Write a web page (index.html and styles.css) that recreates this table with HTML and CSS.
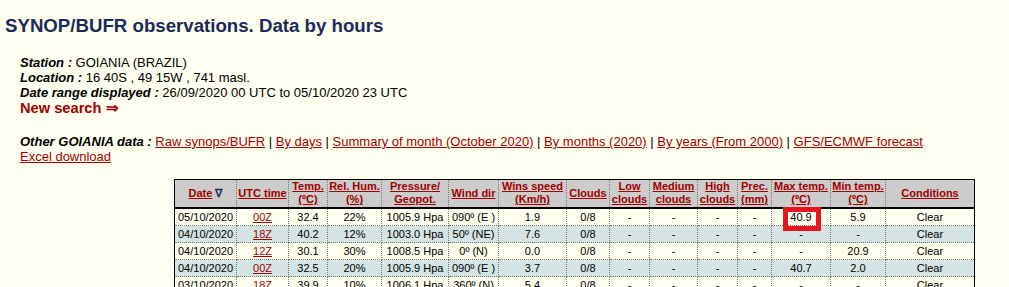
FILE: index.html
```html
<!DOCTYPE html>
<html>
<head>
<meta charset="utf-8">
<title>SYNOP/BUFR observations</title>
<link rel="stylesheet" href="styles.css">
</head>
<body>
<h1 class="title">SYNOP/BUFR observations. Data by hours</h1>
<div class="info">
  <div class="line"><b><i>Station :</i></b> GOIANIA (BRAZIL)</div>
  <div class="line"><b><i>Location :</i></b> 16 40S , 49 15W , 741 masl.</div>
  <div class="line"><b><i>Date range displayed :</i></b> 26/09/2020 00 UTC to 05/10/2020 23 UTC</div>
  <div class="newsearch"><a href="#">New search &rArr;</a></div>
</div>
<div class="other">
  <div class="line"><b><i>Other GOIANIA data :</i></b> <a href="#">Raw synops/BUFR</a> | <a href="#">By days</a> | <a href="#">Summary of month (October 2020)</a> | <a href="#">By months (2020)</a> | <a href="#">By years (From 2000)</a> | <a href="#">GFS/ECMWF forecast</a></div>
  <div class="line"><a href="#">Excel download</a></div>
</div>
<table class="obs">
  <colgroup>
    <col class="c-date"><col class="c-utc"><col class="c-temp"><col class="c-hum"><col class="c-pres"><col class="c-wind"><col class="c-speed"><col class="c-clouds"><col class="c-low"><col class="c-med"><col class="c-high"><col class="c-prec"><col class="c-max"><col class="c-min"><col class="c-cond">
  </colgroup>
  <thead>
    <tr>
      <th><a href="#">Date</a> <span class="sort">&#8711;</span></th>
      <th><a href="#">UTC time</a></th>
      <th><a href="#">Temp.<br>(ºC)</a></th>
      <th><a href="#">Rel. Hum.<br>(%)</a></th>
      <th><a href="#">Pressure/<br>Geopot.</a></th>
      <th><a href="#">Wind dir</a></th>
      <th><a href="#">Wins speed<br>(Km/h)</a></th>
      <th><a href="#">Clouds</a></th>
      <th><a href="#">Low<br>clouds</a></th>
      <th><a href="#">Medium<br>clouds</a></th>
      <th><a href="#">High<br>clouds</a></th>
      <th><a href="#">Prec.<br>(mm)</a></th>
      <th><a href="#">Max temp.<br>(ºC)</a></th>
      <th><a href="#">Min temp.<br>(ºC)</a></th>
      <th><a href="#">Conditions</a></th>
    </tr>
  </thead>
  <tbody>
    <tr>
      <td>05/10/2020</td><td><a href="#">00Z</a></td><td>32.4</td><td>22%</td><td>1005.9 Hpa</td><td>090º (E )</td><td>1.9</td><td>0/8</td><td>-</td><td>-</td><td>-</td><td>-</td><td class="marked">40.9<span class="highlight"></span></td><td>5.9</td><td>Clear</td>
    </tr>
    <tr class="alt">
      <td>04/10/2020</td><td><a href="#">18Z</a></td><td>40.2</td><td>12%</td><td>1003.0 Hpa</td><td>50º (NE)</td><td>7.6</td><td>0/8</td><td>-</td><td>-</td><td>-</td><td>-</td><td>-</td><td>-</td><td>Clear</td>
    </tr>
    <tr>
      <td>04/10/2020</td><td><a href="#">12Z</a></td><td>30.1</td><td>30%</td><td>1008.5 Hpa</td><td>0º (N)</td><td>0.0</td><td>0/8</td><td>-</td><td>-</td><td>-</td><td>-</td><td>-</td><td>20.9</td><td>Clear</td>
    </tr>
    <tr class="alt">
      <td>04/10/2020</td><td><a href="#">00Z</a></td><td>32.5</td><td>20%</td><td>1005.9 Hpa</td><td>090º (E )</td><td>3.7</td><td>0/8</td><td>-</td><td>-</td><td>-</td><td>-</td><td>40.7</td><td>2.0</td><td>Clear</td>
    </tr>
    <tr>
      <td>03/10/2020</td><td><a href="#">18Z</a></td><td>39.9</td><td>10%</td><td>1006.1 Hpa</td><td>360º (N)</td><td>5.4</td><td>0/8</td><td>-</td><td>-</td><td>-</td><td>-</td><td>-</td><td>-</td><td>Clear</td>
    </tr>
    <tr class="alt">
      <td>03/10/2020</td><td><a href="#">12Z</a></td><td>29.8</td><td>28%</td><td>1009.2 Hpa</td><td>090º (E )</td><td>3.7</td><td>0/8</td><td>-</td><td>-</td><td>-</td><td>-</td><td>-</td><td>19.6</td><td>Clear</td>
    </tr>
  </tbody>
</table>
</body>
</html>
```
FILE: styles.css
```css
html, body {
  margin: 0;
  padding: 0;
  background: #ffffef;
  color: #000;
  font-family: "Liberation Sans", Arial, sans-serif;
  font-size: 13px;
}

a {
  color: #a00000;
  text-decoration: underline;
}

.title {
  margin: 15px 0 0 5px;
  font-size: 18.67px;
  line-height: 22px;
  font-weight: bold;
  color: #1b2a5c;
}

.info {
  margin: 18px 0 0 20px;
}

.line {
  line-height: 15px;
}

.newsearch {
  font-size: 14.67px;
  font-weight: bold;
  line-height: 17px;
}

.newsearch a {
  text-decoration: none;
  color: #a00000;
}

.other {
  margin: 17px 0 0 20px;
}

.obs {
  margin: 15px 0 0 174px;
  width: 801px;
  table-layout: fixed;
  border-collapse: collapse;
  border: 1px solid #000;
  font-size: 11px;
}

.c-date { width: 62px; }
.c-utc { width: 52px; }
.c-temp { width: 39px; }
.c-hum { width: 54px; }
.c-pres { width: 67px; }
.c-wind { width: 50px; }
.c-speed { width: 68px; }
.c-clouds { width: 43px; }
.c-low { width: 40px; }
.c-med { width: 48px; }
.c-high { width: 40px; }
.c-prec { width: 34px; }
.c-max { width: 59px; }
.c-min { width: 55px; }
.c-cond { width: 89px; }

.obs th {
  background: #cccccc;
  font-weight: bold;
  line-height: 13px;
  padding: 0 1px 1px;
  height: 26px;
  text-align: center;
  vertical-align: middle;
  border: 1px dotted #777;
  border-top: 1px solid #000;
  border-bottom: 2px solid #000;
  white-space: nowrap;
}

.obs th a {
  color: #a00000;
}

.sort {
  color: #1b2a5c;
  font-weight: bold;
}

.obs td {
  line-height: 14px;
  padding: 1px 1px;
  text-align: center;
  border: 1px dotted #777;
  white-space: nowrap;
  overflow: visible;
}

.obs tr.alt td {
  background: #d4e4e4;
}

.obs td.marked {
  position: relative;
}

.highlight {
  position: absolute;
  left: 11px;
  top: -2px;
  width: 28px;
  height: 14px;
  border: 5px solid #e8141e;
  z-index: 2;
}
```
